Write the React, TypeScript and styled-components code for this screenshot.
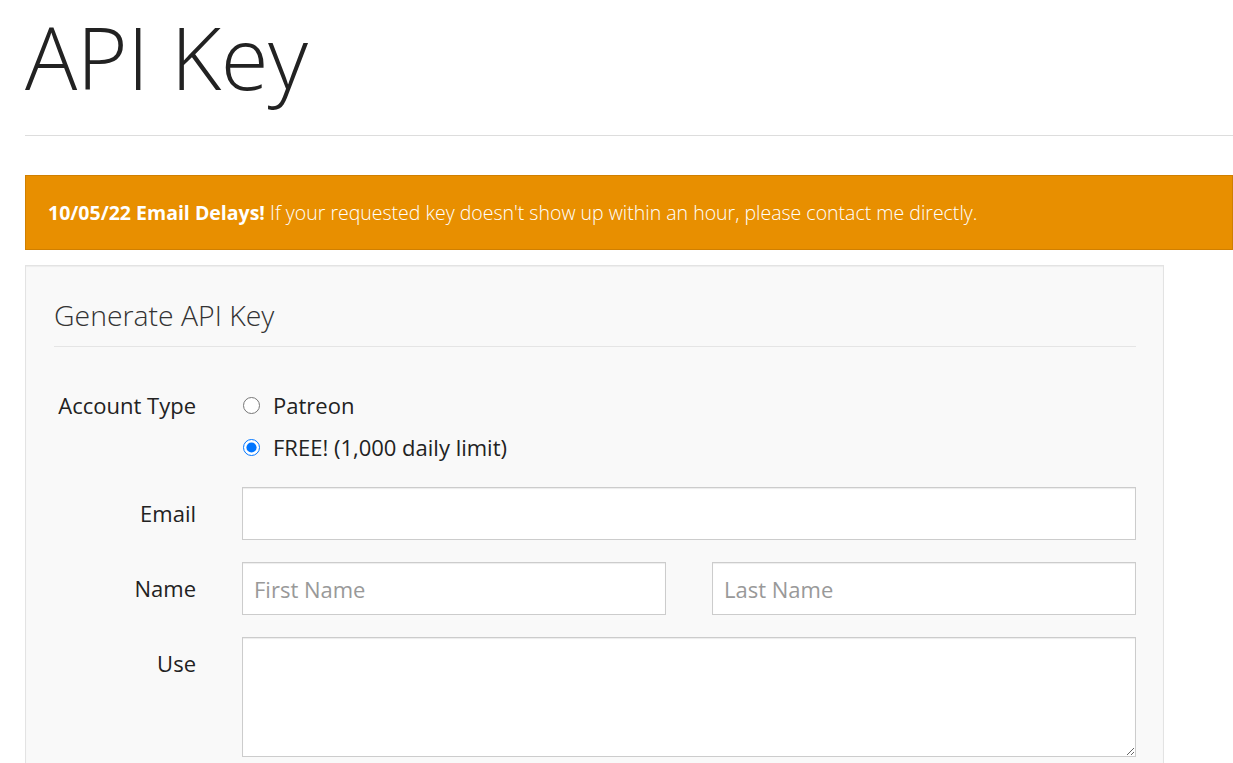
import React from "react";
import styled, { createGlobalStyle } from "styled-components";

const GlobalStyle = createGlobalStyle`
  html, body { margin: 0; padding: 0; background: #fff; }
  body {
    font-family: "Open Sans", "Noto Sans", "Liberation Sans", sans-serif;
    color: #222;
  }
  * { box-sizing: border-box; }
`;

const Page = styled.div`
  padding: 0 0 40px 25px;
`;

const Title = styled.h1`
  margin: 4px 0 0;
  font-size: 87px;
  font-weight: 300;
  line-height: 104px;
  color: #222;
  letter-spacing: -0.5px;
`;

const Rule = styled.hr`
  margin: 27px 0 0;
  border: 0;
  border-top: 1px solid #dddddd;
`;

const Banner = styled.div`
  margin-top: 39px;
  background: #e88f00;
  border: 1px solid #d07f00;
  padding: 24px 22px;
  font-size: 19.5px;
  line-height: 25px;
  color: #fff;
  font-weight: 300;
  strong { font-weight: 700; }
`;

const Card = styled.form`
  margin-top: 15px;
  width: 1139px;
  background: #f9f9f9;
  border: 1px solid #e3e3e3;
  box-shadow: inset 0 1px 1px rgba(0, 0, 0, 0.05);
  padding: 28px 27px 28px 28px;
`;

const Legend = styled.div`
  font-size: 28.4px;
  font-weight: 300;
  line-height: 43px;
  color: #333;
  padding-bottom: 9px;
  border-bottom: 1px solid #e5e5e5;
  margin-bottom: 37px;
`;

const Row = styled.div<{ $gap?: number }>`
  display: grid;
  grid-template-columns: 142px 1fr;
  column-gap: 46px;
  margin-bottom: ${(p) => p.$gap ?? 22}px;
`;

const Label = styled.label<{ $top?: number }>`
  text-align: right;
  font-size: 22px;
  line-height: 28px;
  padding-top: ${(p) => p.$top ?? 12}px;
  color: #222;
  white-space: nowrap;
`;

const RadioList = styled.div`
  display: flex;
  flex-direction: column;
`;

const RadioOption = styled.label`
  display: flex;
  align-items: center;
  height: 42px;
  font-size: 22px;
  color: #222;
  gap: 13px;
`;

const Radio = styled.input`
  width: 17px;
  height: 17px;
  margin: 0 0 0 1px;
  accent-color: #0075ff;
`;

const Pair = styled.div`
  display: grid;
  grid-template-columns: 1fr 1fr;
  column-gap: 46px;
`;

const TextInput = styled.input`
  display: block;
  width: 100%;
  height: 53px;
  padding: 11px 11px;
  font-family: inherit;
  font-size: 22px;
  line-height: 28px;
  color: #333;
  background: #fff;
  border: 1px solid #cccccc;
  border-radius: 0;
  box-shadow: inset 0 1px 1px rgba(0, 0, 0, 0.075);
  outline: none;
  &::placeholder { color: #999; }
`;

const TextArea = styled.textarea`
  display: block;
  width: 100%;
  height: 120px;
  padding: 11px;
  font-family: inherit;
  font-size: 22px;
  line-height: 28px;
  background: #fff;
  border: 1px solid #cccccc;
  border-radius: 0;
  box-shadow: inset 0 1px 1px rgba(0, 0, 0, 0.075);
  outline: none;
  resize: vertical;
`;

export default function App() {
  return (
    <>
      <GlobalStyle />
      <Page>
        <Title>API Key</Title>
        <Rule />
        <Banner>
          <strong>10/05/22 Email Delays!</strong> If your requested key doesn't show up within an hour, please contact me directly.
        </Banner>
        <Card onSubmit={(e) => e.preventDefault()}>
          <Legend>Generate API Key</Legend>
          <Row $gap={19}>
            <Label $top={7}>Account Type</Label>
            <RadioList>
              <RadioOption>
                <Radio type="radio" name="acct" value="patreon" />
                Patreon
              </RadioOption>
              <RadioOption>
                <Radio type="radio" name="acct" value="free" defaultChecked />
                FREE! (1,000 daily limit)
              </RadioOption>
            </RadioList>
          </Row>
          <Row>
            <Label>Email</Label>
            <TextInput type="email" />
          </Row>
          <Row>
            <Label>Name</Label>
            <Pair>
              <TextInput type="text" placeholder="First Name" />
              <TextInput type="text" placeholder="Last Name" />
            </Pair>
          </Row>
          <Row>
            <Label>Use</Label>
            <TextArea />
          </Row>
        </Card>
      </Page>
    </>
  );
}
